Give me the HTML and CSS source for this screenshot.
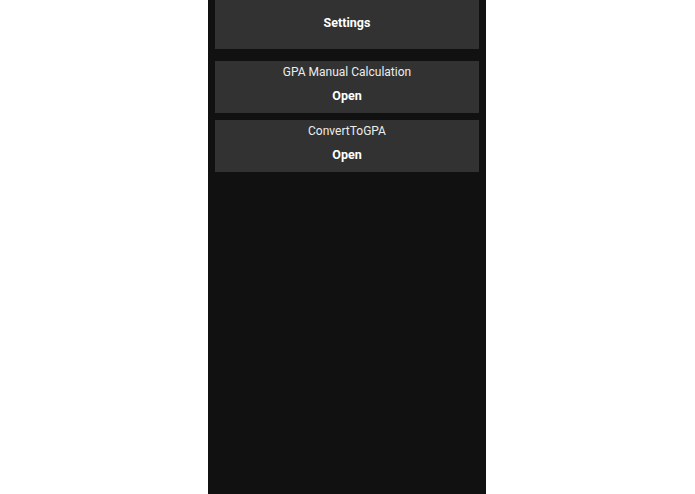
FILE: index.html
```html
<!DOCTYPE html>
<html>
<head>
<meta charset="utf-8">
<link rel="stylesheet" href="styles.css">
</head>
<body>
<div class="screen">
  <div class="card card-top">
    <div class="action">Settings</div>
  </div>
  <div class="list">
    <div class="card">
      <div class="title">GPA Manual Calculation</div>
      <div class="action">Open</div>
    </div>
    <div class="card">
      <div class="title">ConvertToGPA</div>
      <div class="action">Open</div>
    </div>
  </div>
</div>
</body>
</html>
```
FILE: styles.css
```css
html, body {
  margin: 0;
  padding: 0;
  background: #ffffff;
  height: 100%;
}
body {
  font-family: Roboto, "Liberation Sans", sans-serif;
}
.screen {
  width: 278px;
  height: 494px;
  margin-left: calc(50% - 139.5px);
  background: #121111;
  padding: 0 7px;
  box-sizing: border-box;
  display: flex;
  flex-direction: column;
}
.card {
  background: #323232;
  padding: 3px 0 9px;
  display: flex;
  flex-direction: column;
  align-items: center;
}
.card-top {
  padding: 15px 0 18px;
}
.list {
  margin-top: 12px;
  display: flex;
  flex-direction: column;
  gap: 7px;
}
.title {
  font-size: 12px;
  line-height: 17px;
  color: #ececec;
}
.action {
  font-size: 12.5px;
  line-height: 16px;
  font-weight: 700;
  color: #ffffff;
}
.card .title + .action {
  margin-top: 7px;
}
```
